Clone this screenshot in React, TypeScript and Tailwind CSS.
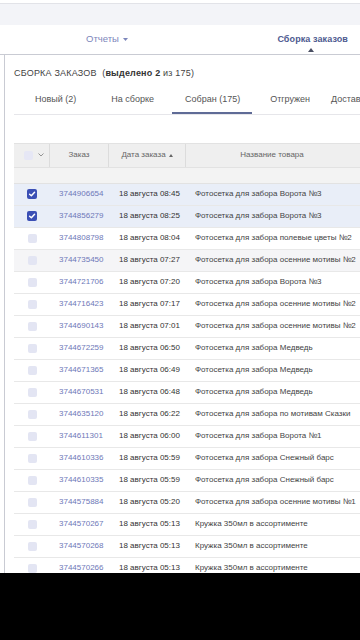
import React from "react"

const rows = [
  { id: "3744906654", date: "18 августа 08:45", name: "Фотосетка для забора Ворота №3", checked: true },
  { id: "3744856279", date: "18 августа 08:25", name: "Фотосетка для забора Ворота №3", checked: true },
  { id: "3744808798", date: "18 августа 08:04", name: "Фотосетка для забора полевые цветы №2" },
  { id: "3744735450", date: "18 августа 07:27", name: "Фотосетка для забора осенние мотивы №2", hover: true },
  { id: "3744721706", date: "18 августа 07:20", name: "Фотосетка для забора Ворота №3" },
  { id: "3744716423", date: "18 августа 07:17", name: "Фотосетка для забора осенние мотивы №2" },
  { id: "3744690143", date: "18 августа 07:01", name: "Фотосетка для забора осенние мотивы №2" },
  { id: "3744672259", date: "18 августа 06:50", name: "Фотосетка для забора Медведь" },
  { id: "3744671365", date: "18 августа 06:49", name: "Фотосетка для забора Медведь" },
  { id: "3744670531", date: "18 августа 06:48", name: "Фотосетка для забора Медведь" },
  { id: "3744635120", date: "18 августа 06:22", name: "Фотосетка для забора по мотивам Сказки" },
  { id: "3744611301", date: "18 августа 06:00", name: "Фотосетка для забора Ворота №1" },
  { id: "3744610336", date: "18 августа 05:59", name: "Фотосетка для забора Снежный барс" },
  { id: "3744610335", date: "18 августа 05:59", name: "Фотосетка для забора Снежный барс" },
  { id: "3744575884", date: "18 августа 05:20", name: "Фотосетка для забора осенние мотивы №1" },
  { id: "3744570267", date: "18 августа 05:13", name: "Кружка 350мл в ассортименте" },
  { id: "3744570268", date: "18 августа 05:13", name: "Кружка 350мл в ассортименте" },
  { id: "3744570266", date: "18 августа 05:13", name: "Кружка 350мл в ассортименте" },
]

const tabs = ["Новый (2)", "На сборке", "Собран (175)", "Отгружен", "Доставлен"]

function Box({ checked }: { checked?: boolean }) {
  if (checked) {
    return (
      <span className="w-[10px] h-[10px] rounded-[2px] bg-[#3b4fb5] flex items-center justify-center">
        <svg width="8" height="8" viewBox="0 0 10 10">
          <path d="M2 5.2 L4.2 7.3 L8.2 2.8" stroke="#fff" strokeWidth="1.8" fill="none" strokeLinecap="round" strokeLinejoin="round" />
        </svg>
      </span>
    )
  }
  return <span className="w-[9px] h-[9px] rounded-[2px] bg-[#e3e5f3] block" />
}

export default function App() {
  return (
    <div className="h-[640px] w-[360px] bg-black overflow-hidden font-['Liberation_Sans',Arial,sans-serif]">
      <div className="h-[573px] bg-white overflow-hidden flex flex-col">
        {/* top band */}
        <div className="h-[4px] bg-white border-b border-[#e2e3e8] shrink-0" />
        <div className="h-[21px] bg-[#f3f4f8] shrink-0" />

        {/* nav */}
        <div className="h-[30px] bg-white border-b border-[#c9cbd3] flex items-center shrink-0 relative">
          <span className="ml-[86px] text-[9.5px] text-[#7c86bb] flex items-center gap-[4px]">
            Отчеты
            <svg width="5" height="3" viewBox="0 0 5 3"><path d="M0 0 L5 0 L2.5 3 Z" fill="#7c86bb" /></svg>
          </span>
          <span className="ml-auto mr-[12px] text-[9px] font-bold text-[#4d5a90] tracking-[0.1px] relative">
            Сборка заказов
            <svg className="absolute left-[31px] top-[15px]" width="6" height="4" viewBox="0 0 6 4"><path d="M0 4 L3 0 L6 4 Z" fill="#4a4f63" /></svg>
          </span>
        </div>

        {/* content */}
        <div className="flex-1 ml-[4px] border-l border-[#c9cbd3] pl-[9px] overflow-hidden">
          <div className="mt-[12px] text-[9px] text-[#444] tracking-[0.2px] whitespace-nowrap">
            СБОРКА ЗАКАЗОВ&nbsp; (<b className="text-[#333]">выделено 2</b> из 175)
          </div>

          <div className="mt-[9px] flex border-b border-[#e6e6ea] h-[25px] items-start whitespace-nowrap text-[9px] text-[#555]">
            {tabs.map((t, i) => (
              <div
                key={t}
                className={
                  i === 0
                    ? "pl-[21px] pr-[35px] h-full pt-[3px]"
                    : i === 1
                    ? "pl-0 pr-[18px] h-full pt-[3px]"
                    : i === 2
                    ? "pl-[13px] pr-[12px] h-full pt-[3px] border-b-[2px] border-[#5f6b96]"
                    : i === 3
                    ? "pl-[18px] pr-[21px] h-full pt-[3px]"
                    : "h-full pt-[3px]"
                }
              >
                {t}
              </div>
            ))}
          </div>

          {/* table */}
          <div className="mt-[28px] w-[400px] text-[8px]">
            <div className="flex h-[25px] bg-[#efefef] border-y border-[#e2e2e2] text-[#666]">
              <div className="w-[36px] flex items-center pl-[10px] gap-[5px] border-r border-[#dcdcdc]">
                <span className="w-[9px] h-[9px] rounded-[2px] bg-[#e6e7f5] block" />
                <svg width="6" height="4" viewBox="0 0 6 4"><path d="M0.5 0.5 L3 3 L5.5 0.5" stroke="#888" strokeWidth="0.9" fill="none" /></svg>
              </div>
              <div className="w-[59px] flex items-center justify-center border-r border-[#dcdcdc]">Заказ</div>
              <div className="w-[77px] flex items-center justify-center border-r border-[#dcdcdc] gap-[3px]">
                Дата заказа
                <svg width="4" height="3" viewBox="0 0 4 3"><path d="M0 3 L2 0 L4 3 Z" fill="#666" /></svg>
              </div>
              <div className="w-[172px] flex items-center justify-center">Название товара</div>
            </div>
            <div className="h-[16px] bg-[#f3f3f3] border-b border-[#e2e2e2]" />
            {rows.map((r) => (
              <div
                key={r.id}
                className={
                  "flex h-[22px] items-center border-b border-[#e8e8e8] " +
                  (r.checked ? "bg-[#e9eef8]" : r.hover ? "bg-[#f5f5f7]" : "bg-white")
                }
              >
                <div className="w-[36px] flex justify-center">
                  <Box checked={r.checked} />
                </div>
                <div className="w-[59px] pl-[9px] text-[#6e78b8]">{r.id}</div>
                <div className="w-[77px] pl-[10px] text-[#333]">{r.date}</div>
                <div className="w-[200px] pl-[9px] text-[#444] whitespace-nowrap">{r.name}</div>
              </div>
            ))}
          </div>
        </div>
      </div>
    </div>
  )
}
